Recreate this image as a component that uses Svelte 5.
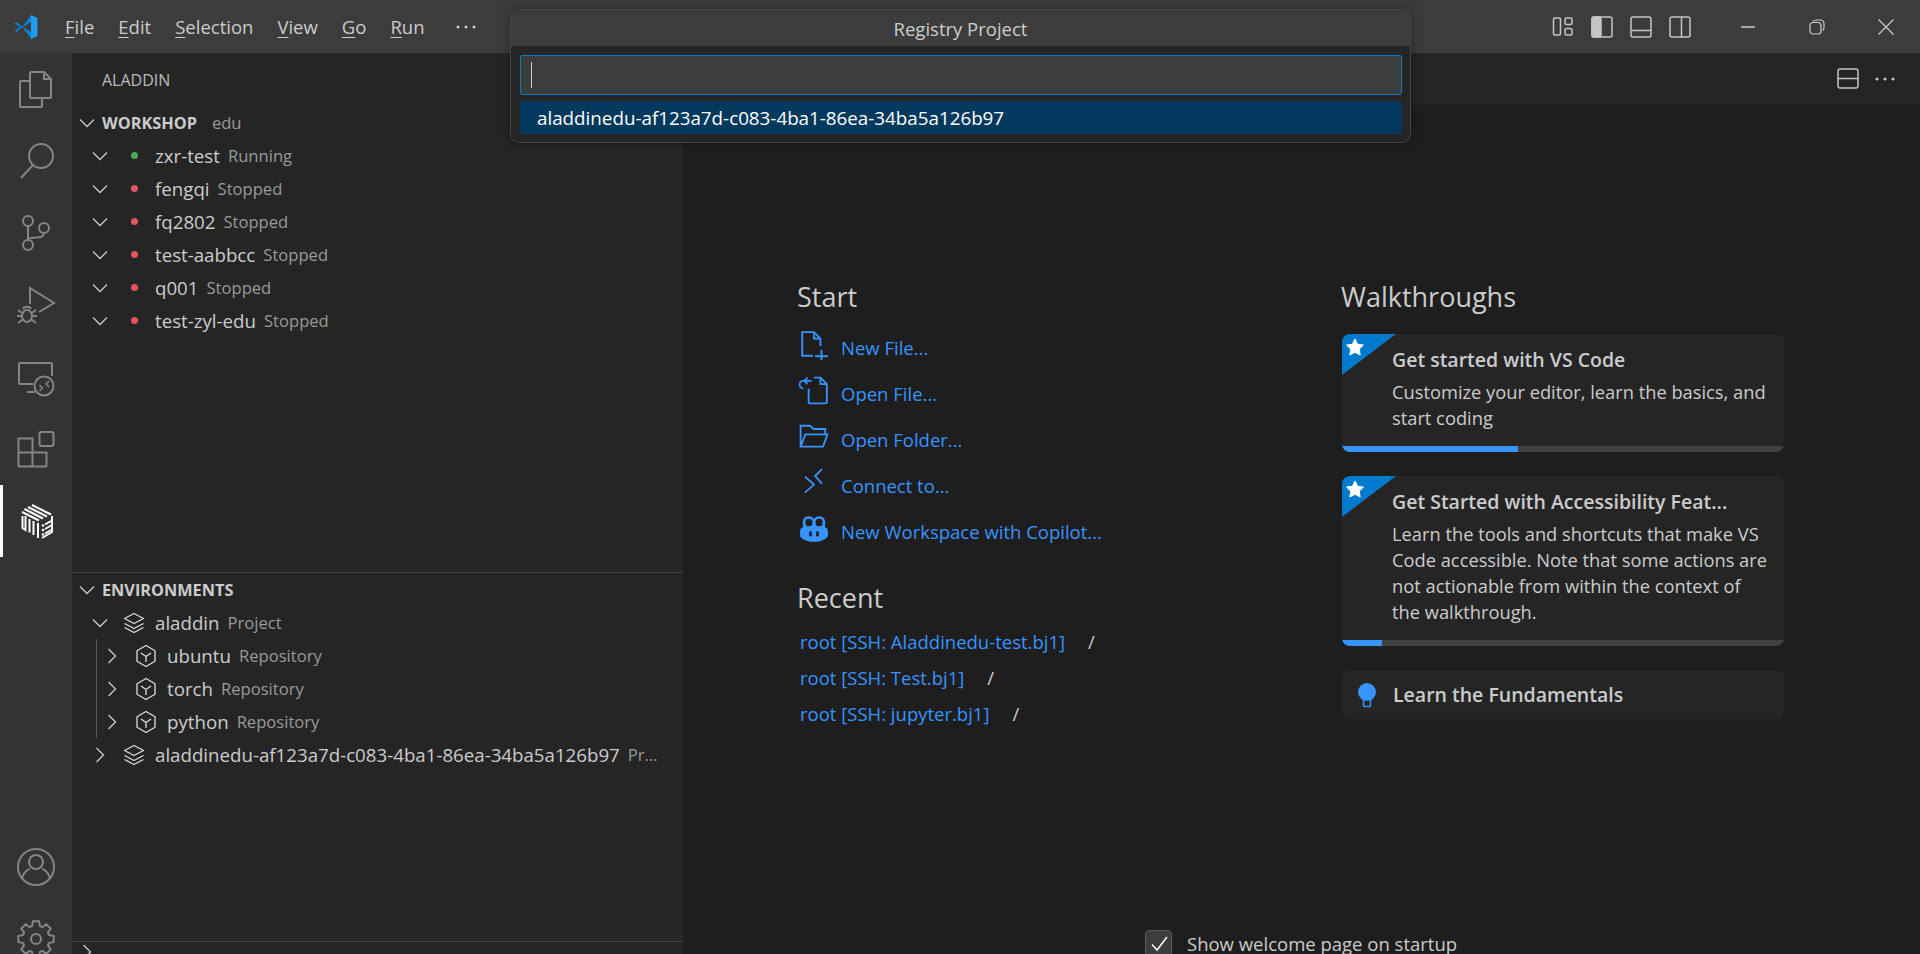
<script>
  const menus = [['F', 'ile'], ['E', 'dit'], ['S', 'election'], ['V', 'iew'], ['G', 'o'], ['R', 'un']];
  const workshops = [
    { name: 'zxr-test', status: 'Running' },
    { name: 'fengqi', status: 'Stopped' },
    { name: 'fq2802', status: 'Stopped' },
    { name: 'test-aabbcc', status: 'Stopped' },
    { name: 'q001', status: 'Stopped' },
    { name: 'test-zyl-edu', status: 'Stopped' }
  ];
  const repos = ['ubuntu', 'torch', 'python'];
  const projectId = 'aladdinedu-af123a7d-c083-4ba1-86ea-34ba5a126b97';
  const recent = [
    'root [SSH: Aladdinedu-test.bj1]',
    'root [SSH: Test.bj1]',
    'root [SSH: jupyter.bj1]'
  ];

  // gear outline, 8 teeth
  function gearPath(cx, cy, outer, inner) {
    const pts = [];
    for (let i = 0; i < 8; i++) {
      const a = (i * Math.PI) / 4;
      for (const [off, r] of [[-0.3, inner], [-0.17, outer], [0.17, outer], [0.3, inner]]) {
        pts.push((cx + r * Math.sin(a + off)).toFixed(1) + ' ' + (cy - r * Math.cos(a + off)).toFixed(1));
      }
    }
    return 'M' + pts.join('L') + 'Z';
  }
</script>

{#snippet chevron(open)}
  <svg class="chev" width="20" height="20" viewBox="0 0 20 20">
    {#if open}
      <path d="M3 6.500l7 7 7-7" />
    {:else}
      <path d="M6.500 3l7 7-7 7" />
    {/if}
  </svg>
{/snippet}

{#snippet layers()}
  <svg class="tree-ic" width="24" height="24" viewBox="0 0 24 24">
    <path d="M12 2.500l9.500 5-9.500 5-9.500-5z" />
    <path d="M2.500 12.500l9.500 5 9.500-5" />
    <path d="M2.500 16.500l9.500 5 9.500-5" />
  </svg>
{/snippet}

{#snippet cube()}
  <svg class="tree-ic" width="24" height="24" viewBox="0 0 24 24">
    <path d="M12 1.500l9 5.200v10.600l-9 5.200-9-5.200V6.700z" />
    <path d="M7 9l5 3.500 5-3.500M12 12.500V18" />
  </svg>
{/snippet}

<div class="window">
  <header class="titlebar">
    <svg class="logo" width="26" height="26" viewBox="0 0 26 26">
      <path fill="#0a7fd0" d="M1.500 9.500l2-1.500 6 4.700L18 1v7l-8 5 8 5v7L9.500 13.300l-6 4.700-2-1.500 5.300-3.500z" />
      <path fill="#1f9cf0" d="M18 1l6.500 3v18L18 25z" />
    </svg>
    <nav class="menu">
      {#each menus as m}
        <span><u>{m[0]}</u>{m[1]}</span>
      {/each}
      <span class="more">
        <svg width="20" height="6" viewBox="0 0 20 6"><circle cx="2" cy="3" r="1.500" /><circle cx="10" cy="3" r="1.500" /><circle cx="18" cy="3" r="1.500" /></svg>
      </span>
    </nav>
    <div class="layout-btns">
      <svg width="22" height="22" viewBox="0 0 22 22">
        <rect x="1.500" y="2" width="7" height="17" rx="1.500" />
        <rect x="13" y="2" width="7" height="6.500" rx="1.500" />
        <rect x="13" y="12.500" width="7" height="6.500" rx="1.500" />
      </svg>
      <svg width="22" height="22" viewBox="0 0 22 22">
        <rect x="1" y="1" width="20" height="20" rx="2" />
        <rect class="solid" x="1" y="1" width="9" height="20" rx="2" />
      </svg>
      <svg width="22" height="22" viewBox="0 0 22 22">
        <rect x="1" y="1" width="20" height="20" rx="2" />
        <path d="M1 14.500h20" />
      </svg>
      <svg width="22" height="22" viewBox="0 0 22 22">
        <rect x="1" y="1" width="20" height="20" rx="2" />
        <path d="M12.500 1v20" />
      </svg>
    </div>
    <div class="win-btns">
      <svg width="16" height="16" viewBox="0 0 16 16"><path d="M1 8h14" stroke-width="1.500" /></svg>
      <svg width="16" height="16" viewBox="0 0 16 16">
        <rect x="1" y="3.500" width="11" height="11.500" rx="3" />
        <path d="M4 2.500C5 1 6 1 7.500 1H11c2.500 0 4 1.500 4 4v3.500c0 1.500-.5 2.500-1.500 3" />
      </svg>
      <svg width="16" height="16" viewBox="0 0 16 16"><path d="M.5.500l15 15M15.500.500l-15 15" /></svg>
    </div>
  </header>

  <div class="body">
    <aside class="activity">
      <div class="act">
        <svg viewBox="0 0 40 40">
          <path d="M14 12V4a1 1 0 0 1 1-1h13l7 7v18a1 1 0 0 1-1 1H15a1 1 0 0 1-1-1V12" />
          <path d="M28 3v7h7" />
          <path d="M14 12H5a1 1 0 0 0-1 1v24a1 1 0 0 0 1 1h20a1 1 0 0 0 1-1v-8" />
        </svg>
      </div>
      <div class="act">
        <svg viewBox="0 0 40 40">
          <circle cx="25" cy="15" r="12" />
          <path d="M17 24L5 37" />
        </svg>
      </div>
      <div class="act">
        <svg viewBox="0 0 40 40">
          <circle cx="12" cy="8" r="5" /><circle cx="12" cy="32" r="5" /><circle cx="28" cy="15" r="5" />
          <path d="M12 13v14M28 20c0 4-4 4.500-8 4.500s-8 .5-8 2.500" />
        </svg>
      </div>
      <div class="act">
        <svg viewBox="0 0 40 40">
          <path d="M14 19V3l24 15-15 9" />
          <ellipse cx="11" cy="31" rx="5" ry="6" />
          <path d="M2 25l4 3M20 25l-4 3M1 31h5M21 31h-5M2 38l4-3M20 38l-4-3M7 24c1-3 7-3 8 0" />
        </svg>
      </div>
      <div class="act">
        <svg viewBox="0 0 40 40">
          <path d="M17 27H4a1 1 0 0 1-1-1V7a1 1 0 0 1 1-1h31a1 1 0 0 1 1 1v12" />
          <path d="M11 35h8" />
          <circle cx="28" cy="29" r="9.500" />
          <path class="thin" d="M23.500 28l3 3-3 3M33 24l-3 3 3 3" />
        </svg>
      </div>
      <div class="act">
        <svg viewBox="0 0 40 40">
          <path d="M2.500 9.500h14v28h-13a1 1 0 0 1-1-1zM2.500 23.500h28v13a1 1 0 0 1-1 1h-13" />
          <rect x="23.500" y="3" width="14" height="14" rx="2" />
        </svg>
      </div>
      <div class="act active">
        <svg viewBox="0 0 40 40">
          <!-- top face -->
          <path d="M16 4l19 9.500M12 6l19 9.500M8.500 8L27 17.500M6 11l17 8.500" />
          <!-- left face -->
          <path d="M6.500 15v12l3 2V15M13.500 18v13.500M17.500 20v14M22 22v15" />
          <!-- right face -->
          <path d="M26 37l10-6V15M29 28l7-4M29 32.500l7-4M29 23.500l7-4" />
          <circle class="pip" cx="27" cy="29" r="1.300" /><circle class="pip" cx="27" cy="24.500" r="1.300" /><circle class="pip" cx="27" cy="33.500" r="1.300" />
        </svg>
      </div>
      <div class="act-bottom">
        <div class="act">
          <svg viewBox="0 0 40 40">
            <circle cx="20" cy="20" r="18" />
            <circle cx="20" cy="15" r="7" />
            <path d="M6 31c2-6 6-9 8-9M34 31c-2-6-6-9-8-9" />
          </svg>
        </div>
        <div class="act">
          <svg viewBox="0 0 40 40">
            <path d={gearPath(20, 20, 18, 13.5)} />
            <circle cx="20" cy="20" r="5" />
          </svg>
        </div>
      </div>
    </aside>

    <section class="sidebar">
      <div class="side-title">ALADDIN</div>
      <div class="pane workshop">
        <div class="pane-head">
          {@render chevron(true)}
          <b>WORKSHOP</b><span class="desc edu">edu</span>
        </div>
        {#each workshops as w}
          <div class="row">
            {@render chevron(true)}
            <span class="dot-box"><i class="dot" class:run={w.status === 'Running'}></i></span>
            <span class="label">{w.name}</span><span class="desc">{w.status}</span>
          </div>
        {/each}
      </div>
      <div class="pane envs">
        <div class="pane-head">
          {@render chevron(true)}
          <b>ENVIRONMENTS</b>
        </div>
        <div class="row">
          {@render chevron(true)}
          {@render layers()}
          <span class="label">aladdin</span><span class="desc">Project</span>
        </div>
        <div class="children">
          {#each repos as r}
            <div class="row">
              {@render chevron(false)}
              {@render cube()}
              <span class="label">{r}</span><span class="desc">Repository</span>
            </div>
          {/each}
        </div>
        <div class="row">
          {@render chevron(false)}
          {@render layers()}
          <span class="label">{projectId}</span><span class="desc trunc">Pr...</span>
        </div>
      </div>
      <div class="pane-last">
        {@render chevron(false)}
      </div>
    </section>

    <main class="editor">
      <div class="tabs">
        <svg width="22" height="22" viewBox="0 0 22 22"><rect x="1" y="1" width="20" height="19" rx="2" /><path d="M1 10.500h20" /></svg>
        <svg width="20" height="6" viewBox="0 0 20 6" class="dots"><circle cx="2" cy="3" r="1.500" /><circle cx="10" cy="3" r="1.500" /><circle cx="18" cy="3" r="1.500" /></svg>
      </div>
      <div class="welcome">
        <div class="col-left">
          <h2>Start</h2>
          <ul class="starts">
            <li>
              <svg viewBox="0 0 28 28"><path d="M13 24H3V2h11l6 6v7M14 2v6h6M15 24.500h12M21 18.500v12" /></svg>
              New File...
            </li>
            <li>
              <svg viewBox="0 0 28 28"><path d="M14 1.500h6l6 6v17a1 1 0 0 1-1 1H10a1 1 0 0 1-1-1V12M20 1.500v6h6M8 1.500L5 4.500l3 3M5 4.500h-1a3 3 0 0 0 0 7M5 4.500h7" /></svg>
              Open File...
            </li>
            <li>
              <svg viewBox="0 0 28 28"><path d="M1.500 23V3.500h9l3 3h11v5M1.500 23h21l4-11.500H6L1.500 23z" /></svg>
              Open Folder...
            </li>
            <li>
              <svg viewBox="0 0 28 28"><path d="M5.500 8l8.500 7.500-8.500 7.500M21.500 1L15 7.500l6.500 7" /></svg>
              Connect to...
            </li>
            <li>
              <svg viewBox="0 0 28 28" class="solid-ic"><path d="M9 2c3 0 4.500 1.500 5 3 .5-1.500 2-3 5-3 4 0 5.500 3 5.500 6 0 2-.2 3-.5 4 1.500.8 3 2 3 4v4c0 3-7 6-13 6S1 23 1 20v-4c0-2 1.500-3.200 3-4-.3-1-.5-2-.5-4 0-3 1.500-6 5.500-6z" /><rect class="cut" x="6" y="4.500" width="6.500" height="7" rx="3" /><rect class="cut" x="15.500" y="4.500" width="6.500" height="7" rx="3" /><rect class="cut" x="9.500" y="16" width="2.500" height="5" rx="1" /><rect class="cut" x="16" y="16" width="2.500" height="5" rx="1" /></svg>
              New Workspace with Copilot...
            </li>
          </ul>
          <h2 class="recent-head">Recent</h2>
          <ul class="recent">
            {#each recent as r}
              <li><span class="lnk">{r}</span><span class="path">/</span></li>
            {/each}
          </ul>
        </div>
        <div class="col-right">
          <h2>Walkthroughs</h2>
          <div class="card">
            <svg class="badge" width="54" height="41" viewBox="0 0 54 41">
              <path class="corner" d="M0 0h54L0 41z" />
              <path class="star" d="M13 5l2.600 5.300 5.800.8-4.200 4.100 1 5.800-5.200-2.700-5.200 2.700 1-5.800-4.200-4.100 5.800-.8z" />
            </svg>
            <div class="card-title">Get started with VS Code</div>
            <div class="card-desc">Customize your editor, learn the basics, and start coding</div>
            <div class="progress"><div class="bar" style="width: 176px"></div></div>
          </div>
          <div class="card">
            <svg class="badge" width="54" height="41" viewBox="0 0 54 41">
              <path class="corner" d="M0 0h54L0 41z" />
              <path class="star" d="M13 5l2.600 5.300 5.800.8-4.200 4.100 1 5.800-5.200-2.700-5.200 2.700 1-5.800-4.200-4.100 5.800-.8z" />
            </svg>
            <div class="card-title">Get Started with Accessibility Feat...</div>
            <div class="card-desc">Learn the tools and shortcuts that make VS Code accessible. Note that some actions are not actionable from within the context of the walkthrough.</div>
            <div class="progress"><div class="bar" style="width: 40px"></div></div>
          </div>
          <div class="card fundamentals">
            <svg width="20" height="26" viewBox="0 0 20 26">
              <path class="bulb" d="M10 1a9 9 0 0 0-9 9c0 3.500 2.500 5.500 4 8h10c1.500-2.500 4-4.500 4-8a9 9 0 0 0-9-9z" />
              <rect class="bulb-base" x="6.500" y="18" width="7" height="6.500" rx="1" />
            </svg>
            <div class="card-title">Learn the Fundamentals</div>
          </div>
        </div>
      </div>
      <label class="startup">
        <span class="check">
          <svg width="20" height="20" viewBox="0 0 20 20"><path d="M3 10.500l5 5.500L18 3" /></svg>
        </span>
        Show welcome page on startup
      </label>
    </main>
  </div>

  <div class="quick">
    <div class="quick-title">Registry Project</div>
    <div class="quick-inner">
      <div class="quick-input"><i class="caret"></i></div>
      <div class="quick-item">{projectId}</div>
    </div>
  </div>
</div>

<style>
  :global(body) {
    margin: 0;
    background: #1e1e1e;
  }

  .window {
    position: relative;
    height: 954px;
    overflow: hidden;
    display: flex;
    flex-direction: column;
    font-family: "Open Sans", "Noto Sans", sans-serif;
    color: #cccccc;
  }

  svg {
    display: block;
    flex: none;
    fill: none;
    stroke: currentColor;
  }

  /* title bar */
  .titlebar {
    height: 53px;
    flex: none;
    display: flex;
    align-items: center;
    background: #3c3c3c;
    padding-left: 13px;
  }

  .logo {
    stroke: none;
  }

  .menu {
    display: flex;
    align-items: center;
    gap: 24px;
    margin-left: 26px;
    font-size: 18.5px;
    color: #cccccc;
  }

  .menu u {
    text-underline-offset: 3px;
  }

  .menu .more {
    margin-left: 7px;
  }

  .menu .more circle, .dots circle {
    fill: currentColor;
    stroke: none;
  }

  .layout-btns {
    margin-left: auto;
    display: flex;
    gap: 17px;
    color: #c5c5c5;
    stroke-width: 1.5;
  }

  .layout-btns .solid {
    fill: #c5c5c5;
  }

  .win-btns {
    display: flex;
    gap: 53px;
    margin-left: 49px;
    margin-right: 26px;
    color: #cccccc;
    stroke-width: 1.2;
  }

  /* layout */
  .body {
    flex: 1;
    min-height: 0;
    display: flex;
  }

  .activity {
    width: 72px;
    flex: none;
    display: flex;
    flex-direction: column;
    background: #333333;
    color: #858585;
  }

  .act {
    height: 72px;
    flex: none;
    display: flex;
    align-items: center;
    justify-content: center;
    border-left: 3px solid transparent;
    border-right: 3px solid transparent;
  }

  .act svg {
    width: 40px;
    height: 40px;
    stroke-width: 2;
  }

  .act .thin {
    stroke-width: 1.5;
  }

  .act.active {
    border-left-color: #ffffff;
    color: #ffffff;
  }

  .pip {
    fill: #ffffff;
    stroke: none;
  }

  .act-bottom {
    margin-top: auto;
    margin-bottom: -21px;
  }

  /* side bar */
  .sidebar {
    width: 611px;
    flex: none;
    display: flex;
    flex-direction: column;
    background: #252526;
    font-size: 18.7px;
  }

  .side-title {
    height: 53px;
    padding-left: 30px;
    display: flex;
    align-items: center;
    font-size: 16px;
    color: #bbbbbb;
  }

  .pane {
    display: flex;
    flex-direction: column;
  }

  .workshop {
    height: 466px;
  }

  .envs {
    flex: 1;
    border-top: 1px solid #444444;
  }

  .pane-head {
    height: 33px;
    flex: none;
    display: flex;
    align-items: center;
    padding-left: 5px;
    font-size: 16.3px;
  }

  .pane-head b {
    font-weight: 700;
    margin-left: 5px;
  }

  .desc {
    color: #9a9a9a;
    font-size: 16.6px;
    margin-left: 8px;
    white-space: nowrap;
  }

  .desc.edu {
    margin-left: 15px;
  }

  .row {
    height: 33px;
    flex: none;
    display: flex;
    align-items: center;
    padding-left: 18px;
    white-space: nowrap;
  }

  .chev {
    stroke: #cccccc;
    stroke-width: 1.3;
  }

  .tree-ic {
    margin-left: 12px;
    stroke: #dddddd;
    stroke-width: 1.3;
    stroke-linejoin: round;
  }

  .dot-box {
    width: 24px;
    margin-left: 12px;
    flex: none;
    display: flex;
    justify-content: center;
  }

  .dot {
    width: 7px;
    height: 7px;
    border-radius: 50%;
    background: #e05561;
  }

  .dot.run {
    background: #4da35a;
  }

  .label {
    margin-left: 9px;
    color: #cccccc;
  }

  .children {
    margin-left: 24px;
    border-left: 1px solid #585858;
  }

  .children .row {
    padding-left: 5px;
  }

  .pane-last {
    height: 12px;
    flex: none;
    border-top: 1px solid #444444;
    padding-left: 5px;
    overflow: hidden;
  }

  /* editor */
  .editor {
    flex: 1;
    min-width: 0;
    display: flex;
    flex-direction: column;
    background: #1e1e1e;
  }

  .tabs {
    height: 52px;
    flex: none;
    display: flex;
    align-items: center;
    justify-content: flex-end;
    gap: 16px;
    padding-right: 25px;
    background: #252526;
    color: #c5c5c5;
    stroke-width: 1.5;
  }

  .welcome {
    display: grid;
    grid-template-columns: 544px 443px;
    margin: 175px 0 0 114px;
    height: 650px;
    flex: none;
  }

  h2 {
    margin: 0;
    font-size: 27px;
    font-weight: 400;
    line-height: 34px;
    color: #cccccc;
  }

  ul {
    list-style: none;
    margin: 0;
    padding: 0;
  }

  .starts {
    margin-top: 10px;
  }

  .starts li {
    height: 46px;
    display: flex;
    align-items: center;
    gap: 12px;
    padding-left: 2px;
    font-size: 18.5px;
    color: #3794ff;
  }

  .starts svg {
    width: 30px;
    height: 30px;
    margin-top: -4px;
    stroke-width: 1.7;
  }

  .solid-ic path {
    fill: #3794ff;
    stroke: none;
  }

  .solid-ic .cut {
    fill: #1e1e1e;
    stroke: none;
  }

  .recent-head {
    margin-top: 27px;
  }

  .recent {
    margin-top: 8px;
  }

  .recent li {
    height: 36px;
    display: flex;
    align-items: center;
    padding-left: 3px;
    font-size: 18.5px;
    color: #3794ff;
  }

  .recent .path {
    color: #cccccc;
    margin-left: 23px;
  }

  .col-right h2 {
    margin-bottom: 20px;
  }

  .card {
    position: relative;
    display: flex;
    flex-direction: column;
    background: #252526;
    border-radius: 8px;
    overflow: hidden;
    margin: 0 0 24px 1px;
    padding: 13px 13px 0 50px;
  }

  .badge {
    position: absolute;
    left: 0;
    top: 0;
  }

  .corner {
    fill: #007acc;
    stroke: none;
  }

  .star {
    fill: #ffffff;
    stroke: #ffffff;
    stroke-linejoin: round;
  }

  .card-title {
    font-size: 19.5px;
    font-weight: 600;
    line-height: 26px;
    color: #cccccc;
    white-space: nowrap;
  }

  .card-desc {
    font-size: 18.3px;
    line-height: 26px;
    margin-top: 6px;
    margin-bottom: 15px;
  }

  .progress {
    position: relative;
    margin: 0 -13px 0 -50px;
    height: 6px;
    background: #404040;
  }

  .bar {
    height: 100%;
    background: #3794ff;
  }

  .fundamentals {
    flex-direction: row;
    align-items: center;
    height: 49px;
    padding: 0 0 0 15px;
    gap: 16px;
  }

  .bulb {
    fill: #3794ff;
    stroke: none;
  }

  .bulb-base {
    fill: none;
    stroke: #3794ff;
    stroke-width: 1.5;
  }

  .startup {
    display: flex;
    align-items: center;
    gap: 15px;
    margin: 0 0 0 462px;
    font-size: 18.5px;
    flex: none;
    white-space: nowrap;
  }

  .check {
    width: 27px;
    height: 27px;
    border-radius: 4px;
    background: #3c3c3c;
    border: 1px solid #5a5a5a;
    box-sizing: border-box;
    display: flex;
    align-items: center;
    justify-content: center;
    color: #ffffff;
    stroke-width: 1.5;
  }

  /* quick pick overlay */
  .quick {
    position: absolute;
    left: 511px;
    top: 10px;
    width: 899px;
    border-radius: 8px;
    background: #252526;
    box-shadow: 0 0 12px rgba(0, 0, 0, 0.4);
    outline: 1px solid #454545;
    overflow: hidden;
  }

  .quick-title {
    height: 36px;
    display: flex;
    align-items: center;
    justify-content: center;
    background: #3c3c3c;
    font-size: 18.5px;
    color: #cccccc;
  }

  .quick-inner {
    padding: 9px 8px 8px 9px;
  }

  .quick-input {
    height: 40px;
    box-sizing: border-box;
    border: 1px solid #007acc;
    background: #3c3c3c;
    border-radius: 2px;
    display: flex;
    align-items: center;
    padding-left: 10px;
  }

  .caret {
    width: 1px;
    height: 26px;
    background: #cccccc;
  }

  .quick-item {
    margin-top: 6px;
    height: 33px;
    display: flex;
    align-items: center;
    padding-left: 17px;
    background: #04395e;
    border-radius: 3px;
    font-size: 18.8px;
    color: #ffffff;
  }
</style>
